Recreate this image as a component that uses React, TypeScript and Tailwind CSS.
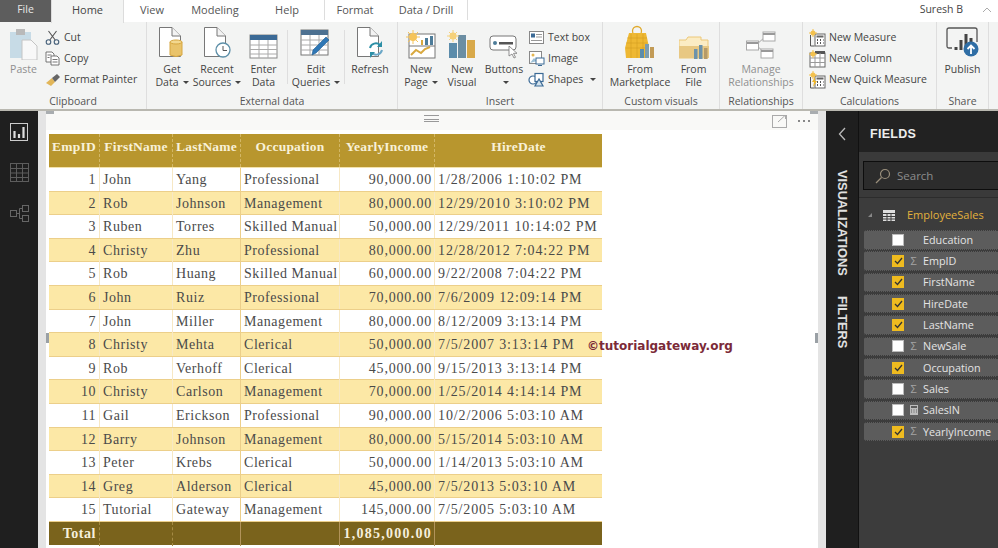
import React from "react";

const ui = "font-['Open_Sans','Noto_Sans',sans-serif]";

const Doc = ({ children }: { children?: React.ReactNode }) => (
  <svg width="34" height="34" viewBox="0 0 34 34" fill="none">
    <path d="M4.5 1.5H17L25.5 10V30.5H4.5Z" fill="#fff" stroke="#777" />
    <path d="M17 1.5V10H25.5" fill="#f3f3f3" stroke="#777" />
    {children}
  </svg>
);

const GetData = () => (
  <Doc>
    <path d="M15 16h12v13q-6 3-12 0Z" fill="#e9c36a" stroke="#d6a640" />
    <ellipse cx="21" cy="16" rx="6" ry="2" fill="#f3d88f" stroke="#d6a640" />
  </Doc>
);
const Recent = () => (
  <Doc>
    <circle cx="23" cy="24" r="7" fill="#fff" stroke="#5d8fa8" strokeWidth="1.3" />
    <path d="M23 20v4.5h4" stroke="#555" />
  </Doc>
);
const TableIcon = () => (
  <svg width="30" height="26" viewBox="0 0 30 26">
    <rect x="1" y="1" width="27" height="23" fill="#fff" stroke="#888" />
    <rect x="1" y="1" width="27" height="5" fill="#3b6a96" />
    <path d="M1 11h27M1 15.500h27M1 20h27M10 6v18M19 6v18" stroke="#aaa" />
  </svg>
);
const EditQ = () => (
  <svg width="32" height="32" viewBox="0 0 32 32">
    <rect x="1" y="2" width="27" height="25" fill="#fff" stroke="#777" />
    <rect x="1" y="2" width="27" height="5" fill="#4d7191" />
    <path d="M1 12h27M1 17h27M1 22h27M10 7v20M19 7v20" stroke="#aaa" />
    <path d="M12 27l1-5L26 9l3 3L16 25Z" fill="#2f77b5" stroke="#1f5c91" strokeWidth=".6" />
  </svg>
);
const Refresh = () => (
  <Doc>
    <path d="M17 22a6 6 0 0 1 10-3" stroke="#2c8fa6" strokeWidth="2" fill="none" />
    <path d="M29 24a6 6 0 0 1-10 3" stroke="#6aa7c7" strokeWidth="2" fill="none" />
    <path d="M29 15v6h-5ZM17 32v-6h5Z" fill="#2c8fa6" />
  </Doc>
);
const Paste = () => (
  <svg width="30" height="32" viewBox="0 0 30 32">
    <rect x="1" y="4" width="21" height="26" fill="#c7dbe6" />
    <rect x="7" y="1" width="9" height="6" fill="#b9b9b9" />
    <path d="M13 12h9l6 6v14H13Z" fill="#f8f8f8" stroke="#c4c4c4" />
  </svg>
);
const Cut = () => (
  <svg width="15" height="15" viewBox="0 0 15 15" fill="none" stroke="#46607a" strokeWidth="1.1">
    <circle cx="3.500" cy="12" r="2.300" />
    <circle cx="11.500" cy="12" r="2.300" />
    <path d="M4.800 10 11.500 1M10.200 10 3.500 1" stroke="#555" />
  </svg>
);
const Copy = () => (
  <svg width="15" height="15" viewBox="0 0 15 15" fill="#fff" stroke="#666" strokeWidth=".9">
    <path d="M1 1h6l2 2v8H1Z" />
    <path d="M6 5h6l2 2v7H6Z" />
    <path d="M2.500 4h4M2.500 6.500h2M7.500 8.500h5M7.500 11h5" />
  </svg>
);
const Painter = () => (
  <svg width="16" height="14" viewBox="0 0 16 14">
    <path d="M1 10 7 5l3 4-4 4Z" fill="#e2b659" />
    <path d="M7 5l5-4 3 3-5 5Z" fill="#666" />
  </svg>
);
const NewPage = () => (
  <svg width="30" height="30" viewBox="0 0 30 30">
    <rect x="3" y="4" width="26" height="24" fill="#fff" stroke="#777" />
    <path d="M3 16h26" stroke="#777" />
    <path d="M5 25l5-5 5 3 4-4 5-2" stroke="#d9a93f" strokeWidth="2" fill="none" />
    <rect x="15" y="10" width="2" height="5" fill="#d9a93f" />
    <rect x="19" y="8" width="3" height="7" fill="#4d7c99" />
    <rect x="24" y="6" width="3" height="9" fill="#4d7c99" />
    <circle cx="7" cy="7" r="4" fill="#f5c45a" />
    <path d="M7 0v14M0 7h14M2 2l10 10M12 2 2 12" stroke="#f5c45a" />
  </svg>
);
const NewVisual = () => (
  <svg width="30" height="30" viewBox="0 0 30 30">
    <rect x="2" y="13" width="8" height="15" fill="#5b8cab" />
    <rect x="11" y="5" width="8" height="23" fill="#6b8ea3" />
    <rect x="20" y="10" width="8" height="18" fill="#d8a94a" />
    <circle cx="6" cy="6" r="3.500" fill="#f5d17a" />
    <path d="M6 0v12M0 6h12M2 2l8 8M10 2l-8 8" stroke="#f5d17a" />
  </svg>
);
const Buttons = () => (
  <svg width="30" height="30" viewBox="0 0 30 30" fill="none">
    <rect x="1" y="6" width="26" height="14" rx="3" fill="#fff" stroke="#777" />
    <circle cx="6" cy="13" r="2" fill="#4d7c99" />
    <rect x="10" y="12" width="14" height="2.500" fill="#555" />
    <path d="M20 16v10l3-2 2 4 1.500-.7-2-4h3.500Z" fill="#fff" stroke="#777" strokeWidth=".8" />
  </svg>
);
const TextBox = () => (
  <svg width="16" height="15" viewBox="0 0 16 15">
    <rect x=".5" y="1.500" width="14" height="12" fill="#fff" stroke="#888" />
    <rect x="2" y="3.500" width="4" height="4" fill="#3b6a96" />
    <path d="M7 4.500h6M7 7h6M2 10.500h11" stroke="#999" />
  </svg>
);
const ImageIcon = () => (
  <svg width="16" height="15" viewBox="0 0 16 15">
    <rect x=".5" y=".5" width="12" height="12" fill="#fff" stroke="#888" />
    <circle cx="4" cy="4" r="1.500" fill="#e3b550" />
    <path d="M1 12l4-5 3 3" fill="#9dc0d6" />
    <rect x="7" y="7" width="8" height="6" fill="#fff" stroke="#3b6a96" />
    <path d="M9 14.500h4" stroke="#3b6a96" />
  </svg>
);
const Shapes = () => (
  <svg width="17" height="15" viewBox="0 0 17 15" fill="#fff" stroke="#3b6a96" strokeWidth="1.200">
    <circle cx="5" cy="8" r="4" />
    <rect x="7" y="1.500" width="8" height="8" />
    <path d="M11 7l-4 7h8Z" fill="#d3e3ee" />
  </svg>
);
const Market = () => (
  <svg width="30" height="36" viewBox="0 0 30 36">
    <circle cx="12" cy="7" r="4.500" fill="none" stroke="#e0a92b" strokeWidth="1.300" />
    <path d="M4 9h17l3 14-2 11H1L0 24Z" fill="#eeb833" />
    <path d="M2 14h20M1 19h21M1 24h20M6 10v24M12 10v24M18 10v24" stroke="#d49f22" strokeWidth=".6" />
    <rect x="15" y="25" width="4" height="9" fill="#5b8cab" />
    <rect x="20" y="20" width="4" height="14" fill="#7c9db0" />
    <rect x="25" y="23" width="4" height="11" fill="#c29b56" />
  </svg>
);
const FromFile = () => (
  <svg width="30" height="24" viewBox="0 0 30 24">
    <path d="M0 4h7l2-3h13v3h7v18H0Z" fill="#fbecc4" stroke="#ecc878" />
    <path d="M0 10h30v12H0Z" fill="#e8c883" />
    <rect x="15" y="13" width="3.500" height="10" fill="#6d93ab" />
    <rect x="20" y="9" width="3.500" height="14" fill="#6d93ab" />
    <rect x="25" y="12" width="3.500" height="11" fill="#b59b69" />
  </svg>
);
const Relations = () => (
  <svg width="30" height="30" viewBox="0 0 30 30" fill="#fff" stroke="#a8a8a8">
    <path d="M10 15 19 7M10 15l9 8" fill="none" />
    <rect x=".5" y="11" width="12" height="9" />
    <rect x="17" y="2" width="12" height="9" />
    <rect x="15" y="19" width="12" height="9" />
    <path d="M1 13h11M17 4h12M15 21h12" stroke="#999" strokeWidth="2" />
  </svg>
);
const Measure = ({ bolt }: { bolt?: boolean }) => (
  <svg width="17" height="18" viewBox="0 0 17 18">
    <path d="M1.500 6v11h4" fill="none" stroke="#555" />
    <rect x="6" y="5" width="10" height="12" fill="#fff" stroke="#666" />
    <rect x="7.500" y="6.500" width="7" height="2" fill="#666" />
    <path d="M8 11h1M11 11h1M14 11h.5M8 14h1M11 14h1M14 14h.5" stroke="#555" strokeWidth="2" />
    <circle cx="4" cy="4" r="2.500" fill="#f3c14f" />
    <path d="M4 0v8M0 4h8" stroke="#f3c14f" />
    {bolt && <path d="M6 6 3 11h2l-1 5 4-6H6Z" fill="#eeb529" />}
  </svg>
);
const Column = () => (
  <svg width="17" height="18" viewBox="0 0 17 18">
    <rect x="1" y="3" width="15" height="14" fill="#fff" stroke="#666" />
    <rect x="6" y="1" width="10" height="3" fill="#555" />
    <path d="M1 8h15M1 12.500h15M6 3v14M11 3v14" stroke="#999" />
    <circle cx="4" cy="4" r="2.500" fill="#f3c14f" />
    <path d="M4 0v8M0 4h8" stroke="#f3c14f" />
  </svg>
);
const Publish = () => (
  <svg width="34" height="34" viewBox="0 0 34 34" fill="none">
    <path d="M6 22H3q-2 0-2-2V4q0-2 2-2h26q2 0 2 2v12" stroke="#555" strokeWidth="1.300" />
    <path d="M10 21v3M15 14v10M20 8v16M25 12v6" stroke="#444" strokeWidth="3" />
    <circle cx="25" cy="23" r="7.500" fill="#2f6ea5" />
    <path d="M25 28v-9M21.500 23l3.500-3.500 3.500 3.500" stroke="#fff" strokeWidth="1.800" />
  </svg>
);

const Caret = () => <span className="inline-block ml-1 align-middle border-x-[3px] border-x-transparent border-t-[3px] border-t-[#444]" />;

const Big = ({
  icon,
  label,
  label2,
  caret,
  w,
  dim,
}: {
  icon: React.ReactNode;
  label: string;
  label2?: string;
  caret?: boolean;
  w: string;
  dim?: boolean;
}) => (
  <div className={`flex flex-col items-center shrink-0 ${w}`}>
    <div className="h-[33px] flex items-end justify-center">{icon}</div>
    <div className={`mt-[3px] text-center leading-[13px] whitespace-nowrap ${dim ? "text-[#8f8f8f]" : "text-[#444]"}`}>
      <div>{label}</div>
      {label2 !== undefined && (
        <div className="flex items-center justify-center h-[13px]">
          {label2}
          {caret && <Caret />}
        </div>
      )}
    </div>
  </div>
);

const Small = ({ icon, label, caret }: { icon: React.ReactNode; label: string; caret?: boolean }) => (
  <div className="flex items-center gap-[3px] h-[21px] whitespace-nowrap text-[#444]">
    <div className="w-[17px] flex justify-center shrink-0">{icon}</div>
    <span>{label}</span>
    {caret && <Caret />}
  </div>
);

const Group = ({ w, label, children, last }: { w: string; label: string; children: React.ReactNode; last?: boolean }) => (
  <div className={`flex flex-col shrink-0 h-full ${w} ${last ? "" : "border-r border-[#dedede]"}`}>
    <div className="flex-1 flex pt-[5px] min-h-0">{children}</div>
    <div className="h-[16px] text-center text-[#555] leading-[16px] whitespace-nowrap">{label}</div>
  </div>
);

const Tab = ({ t, w, active }: { t: string; w: string; active?: boolean }) => (
  <div
    className={`h-[23px] flex items-center justify-center shrink-0 pb-[2px] text-[11px] ${w} ${
      active ? "bg-[#f3f4f3] border-x border-[#dcdcdc] z-10 text-[#444]" : "text-[#555]"
    }`}
  >
    {t}
  </div>
);

const Ribbon = () => (
  <div className={`${ui} text-[10.5px] h-[111px] flex flex-col bg-[#f3f4f3] border-b-2 border-[#b9b8b0]`}>
    <div className="h-[22px] bg-white flex items-start shrink-0">
      <div className="w-[51px] h-[22px] bg-[#5d5d5d] text-[#e8e8e8] flex items-center justify-center shrink-0 pb-[2px]">File</div>
      <Tab t="Home" w="w-[73px]" active />
      <Tab t="View" w="w-[56px]" />
      <Tab t="Modeling" w="w-[70px]" />
      <Tab t="Help" w="w-[74px]" />
      <div className="w-px h-[20px] bg-[#dddddd] shrink-0" />
      <Tab t="Format" w="w-[60px]" />
      <Tab t="Data / Drill" w="w-[82px]" />
      <div className="w-px h-[20px] bg-[#dddddd] shrink-0" />
      <div className="flex-1 flex items-center justify-end h-[22px] pr-[6px] pb-[2px] text-[#444]">
        <span>Suresh B</span>
        <svg className="ml-[19px]" width="10" height="6" viewBox="0 0 10 6" fill="none" stroke="#aaa">
          <path d="M1 5l4-4 4 4" />
        </svg>
      </div>
    </div>
    <div className="flex-1 flex min-h-0">
      <Group w="w-[147px]" label="Clipboard">
        <Big w="w-[47px]" icon={<Paste />} label="Paste" dim />
        <div className="flex flex-col -ml-[3px]">
          <Small icon={<Cut />} label="Cut" />
          <Small icon={<Copy />} label="Copy" />
          <Small icon={<Painter />} label="Format Painter" />
        </div>
      </Group>
      <Group w="w-[251px]" label="External data">
        <div className="w-[3px] shrink-0" />
        <Big w="w-[44px]" icon={<GetData />} label="Get" label2="Data" caret />
        <Big w="w-[46px]" icon={<Recent />} label="Recent" label2="Sources" caret />
        <Big w="w-[47px]" icon={<TableIcon />} label="Enter" label2="Data" />
        <div className="w-px h-[54px] mt-[3px] bg-[#dedede] shrink-0" />
        <Big w="w-[56px]" icon={<EditQ />} label="Edit" label2="Queries" caret />
        <div className="w-px h-[54px] mt-[3px] bg-[#dedede] shrink-0" />
        <Big w="w-[50px]" icon={<Refresh />} label="Refresh" />
      </Group>
      <Group w="w-[205px]" label="Insert">
        <Big w="w-[46px]" icon={<NewPage />} label="New" label2="Page" caret />
        <Big w="w-[36px]" icon={<NewVisual />} label="New" label2="Visual" />
        <Big w="w-[48px]" icon={<Buttons />} label="Buttons" label2="" caret />
        <div className="flex flex-col">
          <Small icon={<TextBox />} label="Text box" />
          <Small icon={<ImageIcon />} label="Image" />
          <Small icon={<Shapes />} label="Shapes" caret />
        </div>
      </Group>
      <Group w="w-[117px]" label="Custom visuals">
        <Big w="w-[74px]" icon={<Market />} label="From" label2="Marketplace" />
        <Big w="w-[33px]" icon={<FromFile />} label="From" label2="File" />
      </Group>
      <Group w="w-[83px]" label="Relationships">
        <Big w="w-full" icon={<Relations />} label="Manage" label2="Relationships" dim />
      </Group>
      <Group w="w-[134px]" label="Calculations">
        <div className="flex flex-col pl-[6px]">
          <Small icon={<Measure />} label="New Measure" />
          <Small icon={<Column />} label="New Column" />
          <Small icon={<Measure bolt />} label="New Quick Measure" />
        </div>
      </Group>
      <Group w="w-[52px]" label="Share">
        <Big w="w-full" icon={<Publish />} label="Publish" />
      </Group>
    </div>
  </div>
);

const rows = [
  [1, "John", "Yang", "Professional", "90,000.00", "1/28/2006 1:10:02 PM"],
  [2, "Rob", "Johnson", "Management", "80,000.00", "12/29/2010 3:10:02 PM"],
  [3, "Ruben", "Torres", "Skilled Manual", "50,000.00", "12/29/2011 10:14:02 PM"],
  [4, "Christy", "Zhu", "Professional", "80,000.00", "12/28/2012 7:04:22 PM"],
  [5, "Rob", "Huang", "Skilled Manual", "60,000.00", "9/22/2008 7:04:22 PM"],
  [6, "John", "Ruiz", "Professional", "70,000.00", "7/6/2009 12:09:14 PM"],
  [7, "John", "Miller", "Management", "80,000.00", "8/12/2009 3:13:14 PM"],
  [8, "Christy", "Mehta", "Clerical", "50,000.00", "7/5/2007 3:13:14 PM"],
  [9, "Rob", "Verhoff", "Clerical", "45,000.00", "9/15/2013 3:13:14 PM"],
  [10, "Christy", "Carlson", "Management", "70,000.00", "1/25/2014 4:14:14 PM"],
  [11, "Gail", "Erickson", "Professional", "90,000.00", "10/2/2006 5:03:10 AM"],
  [12, "Barry", "Johnson", "Management", "80,000.00", "5/15/2014 5:03:10 AM"],
  [13, "Peter", "Krebs", "Clerical", "50,000.00", "1/14/2013 5:03:10 AM"],
  [14, "Greg", "Alderson", "Clerical", "45,000.00", "7/5/2013 5:03:10 AM"],
  [15, "Tutorial", "Gateway", "Management", "145,000.00", "7/5/2005 5:03:10 AM"],
];

const cols = "grid grid-cols-[51px_73px_68px_99px_95px_167px]";

const DataTable = () => (
  <div className="w-[553px] font-['Liberation_Serif',serif] text-[14px] tracking-[0.55px] text-[#4a4a4a] shrink-0">
    <div className={`${cols} h-[33px] bg-[#b8962e] text-[#f8f1d8] font-bold text-[13.5px] tracking-[0.2px]`}>
      {["EmpID", "FirstName", "LastName", "Occupation", "YearlyIncome", "HireDate"].map((h) => (
        <div key={h} className="flex items-center justify-center pb-[7px] border-r border-dashed border-[#d3b766] last:border-r-0 whitespace-nowrap">
          {h}
        </div>
      ))}
    </div>
    <div className="h-[1px] bg-[#f3e2ac]" />
    {rows.map((r) => (
      <div key={r[0] as number} className={`${cols} h-[23.6px] leading-[23px] border-b border-[#eccf8a] ${(r[0] as number) % 2 === 0 ? "bg-[#fce8a6]" : "bg-white"}`}>
        <div className="text-right pr-[3px] border-r border-[#f7e8c4]">{r[0]}</div>
        <div className="pl-[3px] border-r border-[#f7e8c4]">{r[1]}</div>
        <div className="pl-[3px] border-r border-[#eccf8a]">{r[2]}</div>
        <div className="pl-[3px] border-r border-[#f7e8c4] whitespace-nowrap overflow-hidden">{r[3]}</div>
        <div className="text-right pr-[2px] tracking-[0.8px] border-r border-[#f7e8c4]">{r[4]}</div>
        <div className="pl-[3px] whitespace-nowrap tracking-[0.88px]">{r[5]}</div>
      </div>
    ))}
    <div className={`${cols} h-[23px] bg-[#7a631c] text-[#f6efdc] font-bold`}>
      <div className="text-right pr-[3px] leading-[24px] border-r border-dashed border-[#a58b44]">Total</div>
      <div className="border-r border-dashed border-[#a58b44]" />
      <div className="border-r border-[#b2935a]" />
      <div className="border-r border-[#b2935a]" />
      <div className="text-right pr-[2px] leading-[24px] tracking-[1.25px] whitespace-nowrap border-r border-[#b2935a]">1,085,000.00</div>
      <div />
    </div>
  </div>
);

const fields: [string, boolean, "sum" | "calc" | null][] = [
  ["Education", false, null],
  ["EmpID", true, "sum"],
  ["FirstName", true, null],
  ["HireDate", true, null],
  ["LastName", true, null],
  ["NewSale", false, "sum"],
  ["Occupation", true, null],
  ["Sales", false, "sum"],
  ["SalesIN", false, "calc"],
  ["YearlyIncome", true, "sum"],
];

const FieldRow = ({ name, on, kind }: { name: string; on: boolean; kind: "sum" | "calc" | null }) => (
  <div className="h-[19.500px] mb-[1.830px] ml-[5px] bg-[#5c5c5c] border-y border-dotted border-[#3a3a3a] rounded-l-[2px] flex items-center text-[#e4e4e4] text-[10.8px] whitespace-nowrap">
    <div className="w-[28px] shrink-0" />
    <div className={`w-[12px] h-[12px] shrink-0 flex items-center justify-center ${on ? "bg-[#efbb1f]" : "bg-white border border-[#bbb]"}`}>
      {on && (
        <svg width="9" height="8" viewBox="0 0 9 8" fill="none" stroke="#333" strokeWidth="1.300">
          <path d="M1 4l2.500 2.500L8 1" />
        </svg>
      )}
    </div>
    <div className="w-[19px] shrink-0 flex justify-center text-[#a5a5a5] text-[11px]">
      {kind === "sum" && "Σ"}
      {kind === "calc" && (
        <svg width="8" height="10" viewBox="0 0 8 10">
          <rect width="8" height="10" fill="#bdbdbd" />
          <rect x="1" y="1" width="6" height="2" fill="#5c5c5c" />
          <path d="M1 5h1M3.500 5h1M6 5h1M1 7h1M3.500 7h1M6 7h1" stroke="#5c5c5c" />
        </svg>
      )}
    </div>
    <span>{name}</span>
  </div>
);

const RightPanel = () => (
  <div className={`w-[172px] shrink-0 flex h-full ${ui}`}>
    <div className="w-[33px] shrink-0 bg-[#1f1f1f] border-r border-[#111] flex flex-col items-center">
      <svg className="mt-[16px]" width="9" height="14" viewBox="0 0 9 14" fill="none" stroke="#bbb" strokeWidth="1.300">
        <path d="M7 1 1.500 7 7 13" />
      </svg>
      <div className="mt-[29px] [writing-mode:vertical-rl] font-['Liberation_Sans',sans-serif] font-bold text-[12.800px] leading-none text-[#e0e0e0]">VISUALIZATIONS</div>
      <div className="mt-[20px] [writing-mode:vertical-rl] font-['Liberation_Sans',sans-serif] font-bold text-[12.800px] leading-none text-[#e0e0e0]">FILTERS</div>
    </div>
    <div className="flex-1 min-w-0 flex flex-col bg-[#3c3c3c]">
      <div className="h-[41px] bg-[#222] flex items-center pl-[11px] pt-[5px] font-['Liberation_Sans',sans-serif] font-bold text-[12.500px] tracking-[0.3px] text-[#eee] shrink-0">FIELDS</div>
      <div className="h-[46px] bg-[#3a3a3a] border-b border-[#2c2c2c] pt-[9px] pl-[4px] shrink-0">
        <div className="h-[29px] bg-[#2c2c2c] border-y border-l border-[#0d0d0d] flex items-center pl-[11px] gap-[6px] text-[#8c8c8c] text-[11.500px]">
          <svg width="16" height="16" viewBox="0 0 16 16" fill="none" stroke="#9a8f7c" strokeWidth="1.200">
            <circle cx="10" cy="6" r="4.500" />
            <path d="M6.500 9.500 1 15" />
          </svg>
          Search
        </div>
      </div>
      <div className="flex items-center h-[32px] shrink-0 pl-[9px] pt-[2px] text-[#e3b23c] text-[11px]">
        <span className="border-l-[4px] border-l-transparent border-b-[4px] border-b-[#888] mr-[11px]" />
        <svg className="mr-[12px]" width="12" height="11" viewBox="0 0 12 11">
          <rect width="12" height="11" fill="#ddd" />
          <path d="M0 3.500h12M0 6.500h12M0 9h12M4 3v8M8 3v8" stroke="#3c3c3c" />
        </svg>
        EmployeeSales
      </div>
      {fields.map(([n, on, k]) => (
        <FieldRow key={n} name={n} on={on} kind={k} />
      ))}
    </div>
  </div>
);

const Rail = () => (
  <div className="w-[38px] shrink-0 bg-[#1f1f1f] flex flex-col items-center pt-[12px]">
    <svg width="18" height="18" viewBox="0 0 18 18" fill="none">
      <rect x=".5" y=".5" width="17" height="17" stroke="#ccc" />
      <path d="M4.500 15V8M9 15v-4M13.500 15V4" stroke="#ddd" strokeWidth="2.200" />
    </svg>
    <svg className="mt-[22px]" width="19" height="19" viewBox="0 0 19 19" fill="none" stroke="#5d5d5d">
      <rect x=".5" y=".5" width="18" height="18" />
      <path d="M.5 5.500h18M.5 10h18M.5 14.500h18M6.500.5v18M12.500.5v18" />
    </svg>
    <svg className="mt-[23px]" width="19" height="17" viewBox="0 0 19 17" fill="none" stroke="#666">
      <rect x=".5" y="5.500" width="6" height="6" />
      <rect x="12.500" y=".5" width="6" height="6" />
      <rect x="12.500" y="10.500" width="6" height="6" />
      <path d="M6.500 8.500h3M9.500 3.500v10M9.500 3.500h3M9.500 13.500h3" />
    </svg>
  </div>
);

const Canvas = () => (
  <div className="flex-1 min-w-0 bg-[#e4e4e4] px-[8px] h-full">
    <div className="relative bg-white h-full pl-[3px] flex flex-col">
      <div className="absolute inset-x-0 top-0 h-[19px] bg-[#f9f9f7]" />
      <div className="absolute left-0 top-0 w-[8px] h-[3px] bg-[#a9adb0]" />
      <div className="absolute right-0 top-0 w-[8px] h-[3px] bg-[#a9adb0]" />
      <div className="absolute left-[378px] top-[4px] w-[15px] h-[7px] border-y border-[#999]">
        <div className="h-[2px] mt-[1.500px] border-b border-[#999]" />
      </div>
      <svg className="absolute left-[726px] top-[3px]" width="15" height="14" viewBox="0 0 15 14" fill="none" stroke="#aaa">
        <rect x=".5" y="1.500" width="14" height="12" />
        <path d="M6 8l7-6.500M9 1.500h4.500V5" />
      </svg>
      <div className="absolute left-[752px] top-[9px] flex gap-[3px]">
        <span className="w-[2px] h-[2px] bg-[#888]" />
        <span className="w-[2px] h-[2px] bg-[#888]" />
        <span className="w-[2px] h-[2px] bg-[#888]" />
      </div>
      <div className="absolute left-0 top-[222px] w-[3px] h-[10px] bg-[#9aa0a5]" />
      <div className="absolute right-0 top-[222px] w-[3px] h-[10px] bg-[#9aa0a5]" />
      <div className="relative mt-[23px]">
        <DataTable />
      </div>
      <div className="absolute left-[541px] top-[226px] font-['DejaVu_Sans',sans-serif] font-bold text-[12px] text-[#7b2a38] whitespace-nowrap">
        ©tutorialgateway.org
      </div>
    </div>
  </div>
);

export default function App() {
  return (
    <div className="w-[998px] h-[548px] overflow-hidden flex flex-col bg-white">
      <Ribbon />
      <div className="flex-1 min-h-0 flex">
        <Rail />
        <Canvas />
        <RightPanel />
      </div>
    </div>
  );
}
